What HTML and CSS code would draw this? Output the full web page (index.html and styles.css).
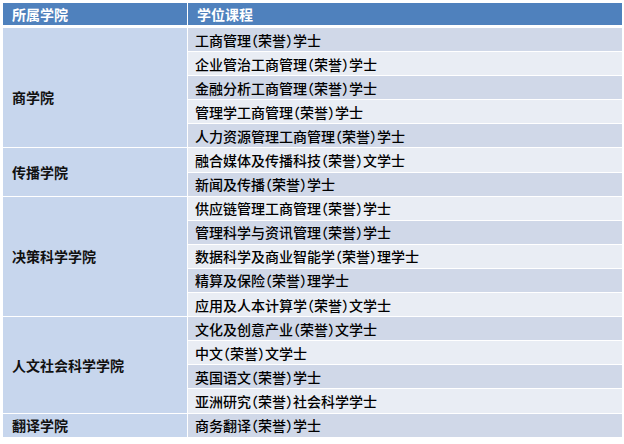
FILE: index.html
```html
<!DOCTYPE html>
<html lang="zh-CN">
<head>
<meta charset="utf-8">
<title>学位课程</title>
<link rel="stylesheet" href="styles.css">
</head>
<body>
<table class="programs">
  <thead>
    <tr>
      <th class="head-school">所属学院</th>
      <th class="head-course">学位课程</th>
    </tr>
  </thead>
  <tbody>
    <tr class="band-a"><td class="school lower" rowspan="5">商学院</td><td class="course">工商管理（荣誉）学士</td></tr>
    <tr class="band-b"><td class="course">企业管治工商管理（荣誉）学士</td></tr>
    <tr class="band-a"><td class="course">金融分析工商管理（荣誉）学士</td></tr>
    <tr class="band-b"><td class="course">管理学工商管理（荣誉）学士</td></tr>
    <tr class="band-a"><td class="course">人力资源管理工商管理（荣誉）学士</td></tr>
    <tr class="band-b"><td class="school" rowspan="2">传播学院</td><td class="course">融合媒体及传播科技（荣誉）文学士</td></tr>
    <tr class="band-a"><td class="course">新闻及传播（荣誉）学士</td></tr>
    <tr class="band-b"><td class="school" rowspan="5">决策科学学院</td><td class="course">供应链管理工商管理（荣誉）学士</td></tr>
    <tr class="band-a"><td class="course">管理科学与资讯管理（荣誉）学士</td></tr>
    <tr class="band-b"><td class="course">数据科学及商业智能学（荣誉）理学士</td></tr>
    <tr class="band-a"><td class="course">精算及保险（荣誉）理学士</td></tr>
    <tr class="band-b"><td class="course">应用及人本计算学（荣誉）文学士</td></tr>
    <tr class="band-a"><td class="school" rowspan="4">人文社会科学学院</td><td class="course">文化及创意产业（荣誉）文学士</td></tr>
    <tr class="band-b"><td class="course">中文（荣誉）文学士</td></tr>
    <tr class="band-a"><td class="course">英国语文（荣誉）学士</td></tr>
    <tr class="band-b"><td class="course">亚洲研究（荣誉）社会科学学士</td></tr>
    <tr class="band-a"><td class="school">翻译学院</td><td class="course">商务翻译（荣誉）学士</td></tr>
  </tbody>
</table>
</body>
</html>
```
FILE: styles.css
```css
html, body {
  margin: 0;
  padding: 0;
  background: #ffffff;
}

body {
  font-family: "Noto Sans CJK SC", "Noto Sans", sans-serif;
  font-size: 14px;
  color: #000000;
  font-feature-settings: "halt";
}

.programs {
  margin: 3px 0 0 3px;
  width: 619px;
  border-collapse: separate;
  border-spacing: 0;
  table-layout: fixed;
}

.programs th {
  height: 22px;
  padding: 0;
  background: #4f81bd;
  color: #ffffff;
  font-weight: 700;
  text-align: left;
  border-bottom: 3px solid #ffffff;
  line-height: 22px;
}

.head-school {
  width: 175px;
  padding-left: 9px !important;
  border-right: 1px solid #ffffff;
}

.head-course {
  padding-left: 9px !important;
}

.programs tbody tr {
  height: 24.1px;
}

.programs td {
  padding: 0;
  line-height: 18px;
  border-bottom: 1px solid #ffffff;
  white-space: nowrap;
}

.school {
  padding-left: 9px !important;
  background: #c7d6ed;
  font-weight: 700;
  color: #111111;
  border-right: 1px solid #ffffff;
  vertical-align: middle;
}

.school.lower {
  padding-top: 19px !important;
}

.course {
  padding-left: 7px !important;
  font-weight: 500;
}

.band-a .course {
  background: #d0d8e8;
}

.band-b .course {
  background: #e9edf4;
}
```
